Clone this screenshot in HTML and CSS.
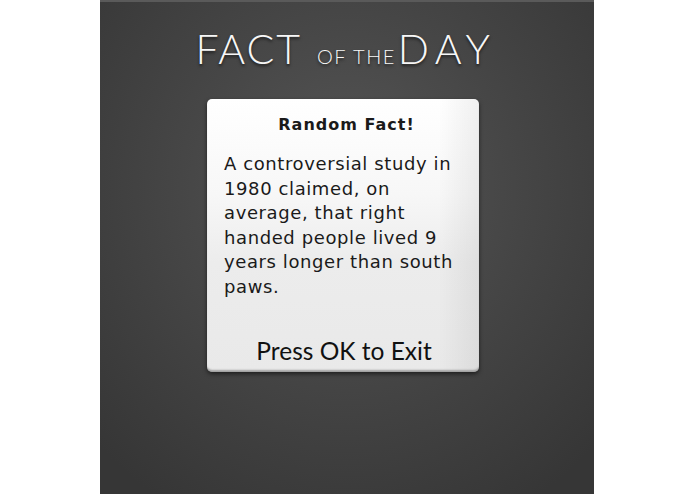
FILE: index.html
```html
<!DOCTYPE html>
<html>
<head>
<meta charset="utf-8">
<link rel="stylesheet" href="styles.css">
</head>
<body>
<div class="panel">
  <h1 class="title"><span class="big">FACT</span><span class="small">OF THE</span><span class="big wide">DAY</span></h1>
  <div class="card">
    <h2 class="card-head">Random Fact!</h2>
    <p class="card-text">A controversial study in<br>1980 claimed, on<br>average, that right<br>handed people lived 9<br>years longer than south<br>paws.</p>
    <div class="card-foot">Press OK to Exit</div>
  </div>
</div>
</body>
</html>
```
FILE: styles.css
```css
html, body {
  margin: 0;
  padding: 0;
  background: #ffffff;
}
.panel {
  width: 494px;
  height: 494px;
  margin-left: 100px;
  background: radial-gradient(ellipse 70% 75% at 50% 38%, #565656 0%, #474747 45%, #363636 100%);
  display: flex;
  flex-direction: column;
  align-items: center;
  box-sizing: border-box;
  border-top: 2px solid #5a5a5a;
}
.title {
  margin: 22px 0 0 -8px;
  font-family: "Lato", "Open Sans", sans-serif;
  font-weight: 300;
  color: #f7f7f7;
  display: flex;
  align-items: baseline;
  line-height: 50px;
  height: 50px;
  text-shadow: 0 2px 3px rgba(0,0,0,0.6);
}
.big {
  font-size: 41px;
  letter-spacing: 2px;
}
.big.wide {
  letter-spacing: 6.5px;
  margin-right: -6px;
}
.small {
  font-size: 20px;
  margin: 0 2px 0 15px;
  letter-spacing: 1.5px;
}
.card {
  align-self: flex-start;
  margin: 25px 0 0 107px;
  width: 272px;
  height: 273px;
  box-sizing: border-box;
  border-radius: 5px;
  background:
    linear-gradient(90deg, rgba(0,0,0,0) 85%, rgba(0,0,0,0.06) 100%),
    linear-gradient(180deg, #ffffff 0%, #f7f7f7 35%, #ececec 60%, #e9e9e9 100%);
  box-shadow: inset 0 -3px 2px -1px #a0a0a0, 0 2px 4px rgba(0,0,0,0.55);
  padding: 16px 10px 0 17px;
  display: flex;
  flex-direction: column;
  color: #1a1a1a;
}
.card-head {
  margin: 0;
  font-family: "DejaVu Sans", sans-serif;
  font-weight: bold;
  font-size: 16px;
  letter-spacing: 1px;
  line-height: 20px;
  text-align: center;
}
.card-text {
  margin: 17px 0 0 0;
  font-family: "DejaVu Sans", sans-serif;
  font-size: 18px;
  letter-spacing: 0.6px;
  line-height: 24.6px;
}
.card-foot {
  margin-top: auto;
  margin-bottom: 6px;
  padding-right: 5px;
  text-align: center;
  font-family: "Lato", "Open Sans", sans-serif;
  font-size: 24.5px;
  line-height: 30px;
  color: #111;
}
```
